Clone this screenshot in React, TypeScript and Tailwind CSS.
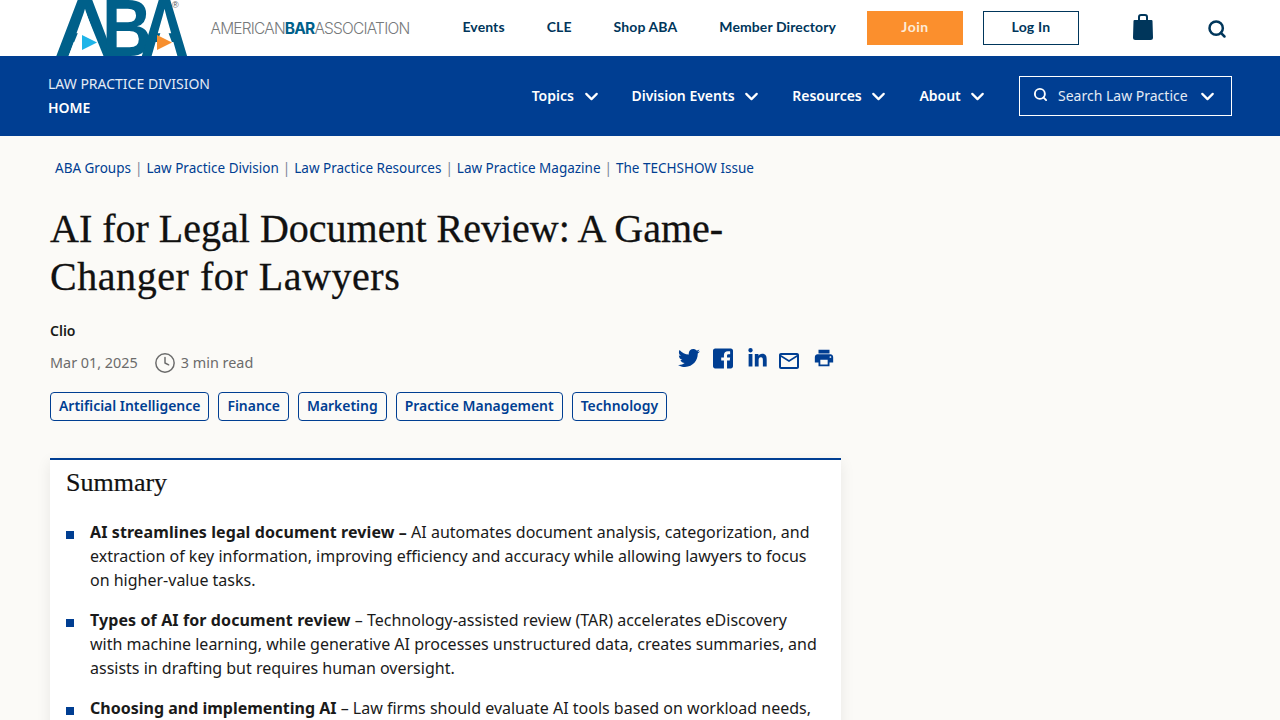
import React from 'react';
import { ChevronDown, Clock, Search } from 'lucide-react';
import { FaLinkedinIn, FaTwitter } from 'react-icons/fa';
import { MdMailOutline, MdPrint } from 'react-icons/md';

const body = "font-['Noto_Sans',sans-serif]";
const serif = "font-['Liberation_Serif',serif]";

const topLinks = ['Events', 'CLE', 'Shop ABA', 'Member Directory'];
const mainLinks = ['Topics', 'Division Events', 'Resources', 'About'];
const crumbs = ['ABA Groups', 'Law Practice Division', 'Law Practice Resources', 'Law Practice Magazine', 'The TECHSHOW Issue'];
const tags = ['Artificial Intelligence', 'Finance', 'Marketing', 'Practice Management', 'Technology'];

const summary = [
  {
    lead: 'AI streamlines legal document review –',
    leadClass: 'font-bold tracking-[0.1px]',
    text: ' AI automates document analysis, categorization, and extraction of key information, improving efficiency and accuracy while allowing lawyers to focus on higher-value tasks.',
  },
  {
    lead: 'Types of AI for document review',
    leadClass: 'font-bold tracking-[0.1px]',
    text: ' – Technology-assisted review (TAR) accelerates eDiscovery with machine learning, while generative AI processes unstructured data, creates summaries, and assists in drafting but requires human oversight.',
  },
  {
    lead: 'Choosing and implementing AI',
    leadClass: 'font-bold',
    text: ' – Law firms should evaluate AI tools based on workload needs,',
  },
];

// Logo: real letters, laid over each other like the ABA ligature, with the A counters cleared
const AbaLogo = () => {
  const letter = {
    fontFamily: 'Liberation Sans, sans-serif',
    fontWeight: 700,
    fontSize: 81,
    fill: '#00608a',
    lengthAdjust: 'spacingAndGlyphs' as const,
    y: 56,
  };
  return (
    <svg width="142" height="56" viewBox="0 0 142 56" className="shrink-0">
      <text {...letter} x="-2" textLength="62">A</text>
      <polygon points="12.500,56 30,13 47.500,56" fill="#fff" />
      <text {...letter} x="46" textLength="50">B</text>
      <text {...letter} x="84" textLength="49">A</text>
      <polygon points="96,56 108.500,22 121,56" fill="#fff" />
      <polygon points="26,35 41,42.500 26,50" fill="#1fb4e8" />
      <polygon points="101,35 116,42.500 101,50" fill="#f78f2e" />
      <text x="116" y="8" fontFamily="Liberation Sans, sans-serif" fontSize="9" fill="#555">®</text>
    </svg>
  );
};

const Bag = () => (
  <svg width="22" height="26" viewBox="0 0 22 26" fill="#00365b">
    <path d="M6 6V3A3 3 0 0 1 9 0h4a3 3 0 0 1 3 3v3h-2V3a1 1 0 0 0-1-1H9a1 1 0 0 0-1 1v3z" />
    <path d="M2.500 6h17a1 1 0 0 1 1 1l.5 16.500a2.500 2.500 0 0 1-2.500 2.500h-15A2.500 2.500 0 0 1 1 23.500L1.500 7a1 1 0 0 1 1-1z" />
  </svg>
);

const FacebookSquare = () => (
  <svg width="20" height="23" viewBox="0 0 448 512" fill="currentColor" className="ml-[13px]">
    <path d="M448 80v352c0 26.500-21.500 48-48 48h-85.300V302.800h60.600l8.700-67.600h-69.300V192c0-19.600 5.400-32.900 33.500-32.900H384V98.700c-6.200-.8-27.400-2.700-52.200-2.700-51.600 0-87 31.500-87 89.400v49.900H184v67.600h60.900V480H48c-26.500 0-48-21.500-48-48V80c0-26.500 21.500-48 48-48h352c26.500 0 48 21.500 48 48z" />
  </svg>
);

export default function App() {
  return (
    <div className={`h-screen overflow-hidden bg-[#fbfaf7] ${body}`}>
      {/* Barra superior */}
      <header className="flex h-14 items-center overflow-hidden bg-white pl-[56px] pr-[53px]">
        <AbaLogo />
        <div className="ml-[12.5px] whitespace-nowrap pt-[1px] font-['Inter',sans-serif] text-[15.5px] font-light tracking-[-0.8px] text-[#777a7c]">
          AMERICAN<span className="font-bold text-[#00608a]">BAR</span>ASSOCIATION
        </div>
        <nav className="ml-auto flex items-center gap-[42px] pb-[3px] font-['Lato',sans-serif] text-[14px] font-bold tracking-[0.1px] text-[#00365b]">
          {topLinks.map((link) => (
            <a key={link} href="#" className="whitespace-nowrap">
              {link}
            </a>
          ))}
        </nav>
        <a href="#" className="ml-[31px] flex h-[34px] w-[96px] items-center justify-center bg-[#fb8f2d] pb-[3px] font-['Lato',sans-serif] text-[14px] font-bold tracking-[0.5px] text-[#fdebd8]">
          Join
        </a>
        <a href="#" className="ml-[20px] flex h-[34px] w-[96px] items-center justify-center border border-[#00365b] pb-[3px] font-['Lato',sans-serif] text-[14px] font-bold tracking-[0.2px] text-[#00365b]">
          Log In
        </a>
        <span className="ml-[53px] flex pb-[2px]"><Bag /></span>
        <Search className="ml-[53px] mt-[2px] h-5 w-5 text-[#00365b]" strokeWidth={3} />
      </header>

      {/* Barra de la división */}
      <div className="flex h-20 items-center bg-[#003e92] px-12 text-white">
        <div className="text-[14px] leading-6">
          <div className="text-[#e4ebf5]">LAW PRACTICE DIVISION</div>
          <div className="font-semibold">HOME</div>
        </div>
        <nav className="ml-auto flex items-center gap-[30px] text-[14px] font-semibold">
          {mainLinks.map((link) => (
            <a key={link} href="#" className="flex items-center gap-[6.6px] whitespace-nowrap">
              <span className="pb-[2px]">{link}</span>
              <ChevronDown className="h-[21px] w-[21px]" strokeWidth={2.5} />
            </a>
          ))}
        </nav>
        <div className="ml-[30.6px] flex h-10 w-[213px] items-center border border-white pl-[13px] text-[14px] text-[#e4ebf5]">
          <Search className="mb-[4px] h-[15px] w-[15px] text-white" strokeWidth={3} />
          <span className="ml-[10px] whitespace-nowrap pb-[2px]">Search Law Practice</span>
          <ChevronDown className="ml-[9.6px] h-[21px] w-[21px] text-white" strokeWidth={2.5} />
        </div>
      </div>

      <main className="pl-[50px]">
        <div className="w-[791px]">
          <div className="flex items-center pl-[5px] pt-[22px] text-[13.5px] leading-5 text-[#003e92]">
            {crumbs.map((crumb, i) => (
              <React.Fragment key={crumb}>
                {i > 0 && <span className="px-[4px] text-[#7d8797]">|</span>}
                <a href="#" className="whitespace-nowrap">{crumb}</a>
              </React.Fragment>
            ))}
          </div>

          <h1 className={`mt-[27px] text-[40px] leading-[48px] text-[#111] [-webkit-text-stroke:0.3px_#111] ${serif}`}>
            AI for Legal Document Review: A Game-
            <br />
            <span className="tracking-[0.55px]">Changer for Lawyers</span>
          </h1>

          <div className="mt-[20px] text-[14px] font-semibold leading-5 text-[#1a1a1a]">Clio</div>

          <div className="mt-[10px] flex h-[24px] items-center text-[14.4px] text-[#6b6b6b]">
            <span>Mar 01, 2025</span>
            <Clock className="ml-[16px] h-[22px] w-[22px]" strokeWidth={1.6} />
            <span className="ml-[5px]">3 min read</span>
            <div className="ml-auto mr-[6px] mt-[-10px] flex items-center text-[#003e92]">
              <FaTwitter className="h-[22px] w-[22px]" />
              <FacebookSquare />
              <FaLinkedinIn className="ml-[14px] h-[21px] w-[21px]" />
              <MdMailOutline className="ml-[9px] mt-[5px] h-[24px] w-[24px]" />
              <MdPrint className="ml-[12px] h-[22px] w-[22px]" />
            </div>
          </div>

          <div className="mt-[17px] flex gap-[9px]">
            {tags.map((tag) => (
              <a key={tag} href="#" className="flex h-[29px] items-center rounded-[4px] border border-[#003e92] px-2 text-[13.95px] font-semibold whitespace-nowrap text-[#003e92]">
                {tag}
              </a>
            ))}
          </div>

          {/* Resumen */}
          <section className="mt-[37px] border-t-2 border-[#003e92] bg-white px-4 pb-10 shadow-[0_4px_14px_rgba(0,0,0,0.08)]">
            <h2 className={`pt-[6px] text-[26px] leading-[34px] text-[#111] [-webkit-text-stroke:0.2px_#111] ${serif}`}>Summary</h2>
            <ul className="mt-[20px] flex flex-col gap-4 pr-[5px] text-[16px] leading-6 text-[#1a1a1a]">
              {summary.map((item) => (
                <li key={item.lead} className="relative pl-6">
                  <span className="absolute left-0 top-[11px] h-2 w-2 bg-[#003e92]" />
                  <strong className={item.leadClass}>{item.lead}</strong>
                  {item.text}
                </li>
              ))}
            </ul>
          </section>
        </div>
      </main>
    </div>
  );
}
